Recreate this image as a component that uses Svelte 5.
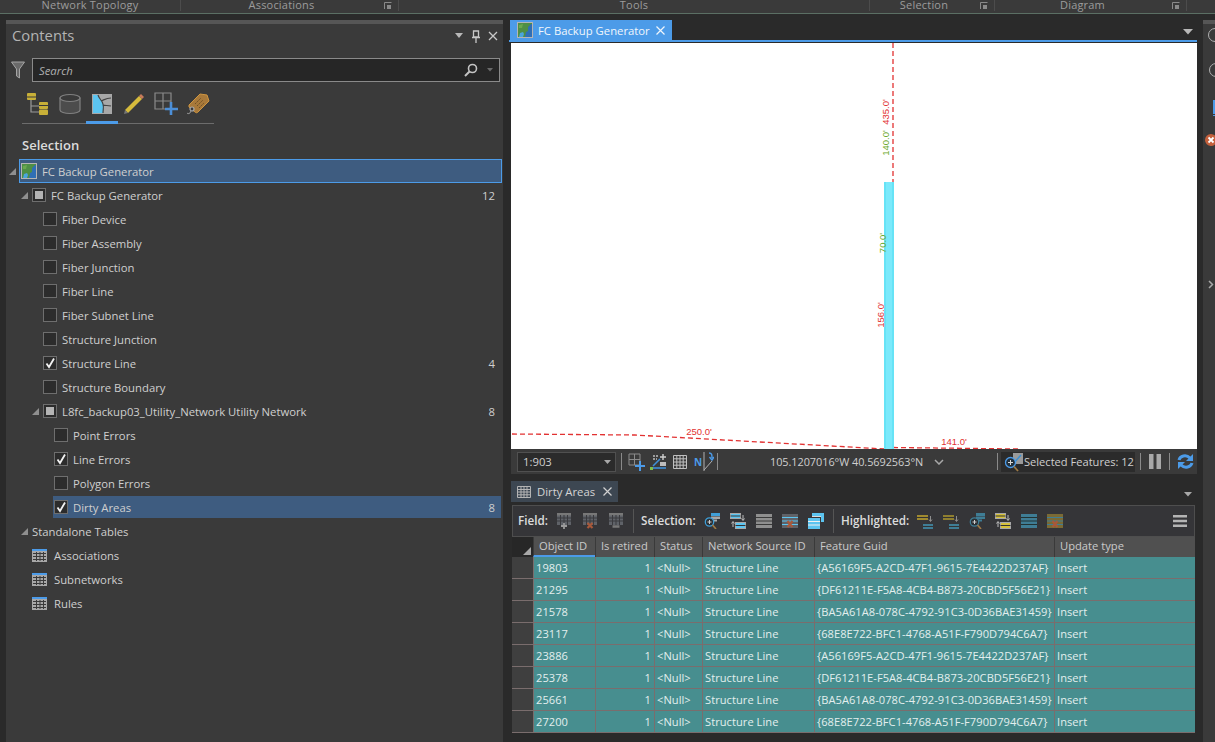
<script>
	const ribbon = [
		{ label: 'Network Topology', width: 181 },
		{ label: 'Associations', width: 218, launcher: true },
		{ label: 'Tools', width: 471 },
		{ label: 'Selection', width: 125, launcher: true },
		{ label: 'Diagram', width: 192, launcher: true }
	];

	const tree = [
		{ kind: 'map', label: 'FC Backup Generator', indent: 3, selected: 'outlined' },
		{ kind: 'partial', label: 'FC Backup Generator', indent: 15, count: 12 },
		{ kind: 'box', label: 'Fiber Device', indent: 37 },
		{ kind: 'box', label: 'Fiber Assembly', indent: 37 },
		{ kind: 'box', label: 'Fiber Junction', indent: 37 },
		{ kind: 'box', label: 'Fiber Line', indent: 37 },
		{ kind: 'box', label: 'Fiber Subnet Line', indent: 37 },
		{ kind: 'box', label: 'Structure Junction', indent: 37 },
		{ kind: 'box', label: 'Structure Line', indent: 37, checked: true, count: 4 },
		{ kind: 'box', label: 'Structure Boundary', indent: 37 },
		{ kind: 'partial', label: 'L8fc_backup03_Utility_Network Utility Network', indent: 26, count: 8 },
		{ kind: 'box', label: 'Point Errors', indent: 48 },
		{ kind: 'box', label: 'Line Errors', indent: 48, checked: true },
		{ kind: 'box', label: 'Polygon Errors', indent: 48 },
		{ kind: 'box', label: 'Dirty Areas', indent: 48, checked: true, count: 8, selected: 'plain' },
		{ kind: 'heading', label: 'Standalone Tables', indent: 15 },
		{ kind: 'table', label: 'Associations', indent: 26 },
		{ kind: 'table', label: 'Subnetworks', indent: 26 },
		{ kind: 'table', label: 'Rules', indent: 26 }
	];

	const guids = [
		'{A56169F5-A2CD-47F1-9615-7E4422D237AF}',
		'{DF61211E-F5A8-4CB4-B873-20CBD5F56E21}',
		'{BA5A61A8-078C-4792-91C3-0D36BAE31459}',
		'{68E8E722-BFC1-4768-A51F-F790D794C6A7}'
	];
	const ids = [19803, 21295, 21578, 23117, 23886, 25378, 25661, 27200];
	const rows = ids.map((id, i) => ({ id, guid: guids[i % 4] }));
	const columns = ['Object ID', 'Is retired', 'Status', 'Network Source ID', 'Feature Guid', 'Update type'];
</script>

{#snippet launcher()}
	<svg class="launcher" width="8" height="8" viewBox="0 0 8 8">
		<path d="M0.5 7V0.5H7.5" fill="none" stroke="#8a8a8a" />
		<path d="M3 3h4v4H3z" fill="#8a8a8a" />
	</svg>
{/snippet}

{#snippet mapIcon(size)}
	<svg width={size} height={size} viewBox="0 0 16 16">
		<rect x="0.5" y="0.5" width="15" height="15" fill="#4f8f45" stroke="#b5b5b5" />
		<path d="M8 15L9 10 11 9 11 5 14 2 15 2V15Z" fill="#2f6fb5" />
		<path d="M2 15L3 11 6 10 7 12 6 15Z" fill="#4aa5dd" />
		<path d="M2 3L6 2 5 6 2 6Z" fill="#6aa84f" />
	</svg>
{/snippet}

{#snippet tableIcon()}
	<svg width="15" height="13" viewBox="0 0 15 13">
		<rect width="15" height="13" fill="#a8a8a8" />
		<rect width="15" height="2" fill="#4c9be8" />
		<path d="M1 4.5h13M1 7.5h13M1 10.5h13M4.5 3v9M8 3v9M11.5 3v9" stroke="#3a3a3a" />
	</svg>
{/snippet}

{#snippet fieldIcon(mark)}
	<svg width="16" height="16" viewBox="0 0 16 16">
		<rect x="1" y="0" width="14" height="12" fill="#5f6268" />
		<rect x="1" y="0" width="14" height="2.500" fill="#787878" />
		<path d="M1 5h14M1 8h14M4.500 2v10M8 2v10M11.500 2v10" stroke="#3a3a3e" />
		{#if mark === 'add'}
			<path d="M8 10v6M5 13h6" stroke="#9a9a9a" stroke-width="1.800" />
		{:else if mark === 'del'}
			<path d="M5.500 10l5 5M10.500 10l-5 5" stroke="#a8583a" stroke-width="2.200" />
		{:else}
			<path d="M4.500 13.500h7" stroke="#787878" stroke-width="2.500" />
		{/if}
	</svg>
{/snippet}

{#snippet zoomRows(a, b)}
	<svg width="16" height="16" viewBox="0 0 16 16">
		<rect x="7" y="0" width="9" height="3" fill={b} />
		<rect x="7" y="3.500" width="9" height="2.500" fill={a} />
		<rect x="7" y="6.500" width="6" height="2" fill={a} />
		<circle cx="5.500" cy="9" r="4.200" fill="#2b2f33" stroke={b} stroke-width="1.300" />
		<path d="M3.500 9h4M5.500 7v4" stroke="#cfcfcf" />
		<path d="M8.500 12l3.500 4" stroke="#a07b45" stroke-width="1.600" />
	</svg>
{/snippet}

{#snippet swapRows(top, bottom)}
	<svg width="16" height="16" viewBox="0 0 16 16">
		<rect x="0.500" y="0.500" width="10" height="5" fill={top} stroke="#a8a8a8" />
		<path d="M0.500 3h10" stroke="#333" />
		<rect x="5.500" y="9.500" width="10" height="6" fill={bottom} stroke="#a8a8a8" />
		<path d="M5.500 12.500h10" stroke="#333" />
		<path d="M13 2v5M11.500 5.500l1.500 2 1.500-2M3 14V9M1.500 10.500l1.500-2 1.500 2" fill="none" stroke="#bdbdbd" />
	</svg>
{/snippet}

{#snippet stripes(fill, line, del)}
	<svg width="16" height="14" viewBox="0 0 16 14">
		<rect width="16" height="14" fill={fill} />
		<path d="M0 3.500h16M0 7h16M0 10.500h16" stroke={line} />
		{#if del}
			<path d="M5.500 7l5 6M10.500 7l-5 6" stroke="#a8583a" stroke-width="2.200" />
		{/if}
	</svg>
{/snippet}

{#snippet moveDown(bar)}
	<svg width="16" height="15" viewBox="0 0 16 15">
		<rect x="0" y="1" width="11" height="5" fill={bar} />
		<path d="M0 3.500h11" stroke="#333" />
		<rect x="6" y="10" width="10" height="5" fill="#3f7d95" />
		<path d="M6 12.500h10" stroke="#333" />
		<path d="M13.500 2v5M12 5.500l1.500 2 1.500-2" fill="none" stroke="#8f8f8f" />
	</svg>
{/snippet}

<div class="app">
	<header class="ribbon">
		{#each ribbon as group}
			<div class="ribbon-group" class:with-launcher={group.launcher} style="width:{group.width}px">
				<span>{group.label}</span>
				{#if group.launcher}{@render launcher()}{/if}
			</div>
		{/each}
	</header>

	<main class="workspace">
		<section class="contents">
			<div class="pane-head">
				<h2>Contents</h2>
				<div class="pane-controls">
					<svg width="10" height="6" viewBox="0 0 10 6"><path d="M1 0h8L5 5z" fill="#b8b8b8" /></svg>
					<svg width="10" height="13" viewBox="0 0 10 13"><path d="M2.500 1h5v6h-5zM1 7.500h8M5 8v5" fill="none" stroke="#c8c8c8" stroke-width="1.300" /></svg>
					<svg width="10" height="10" viewBox="0 0 10 10"><path d="M1 1l8 8M9 1l-8 8" stroke="#c8c8c8" stroke-width="1.300" /></svg>
				</div>
			</div>

			<div class="search-row">
				<svg width="14" height="18" viewBox="0 0 14 18"><path d="M0.500 1h13L8.500 8v9l-3-2V8z" fill="#6a6a6a" stroke="#a5a5a5" /></svg>
				<div class="search">
					<span>Search</span>
					<svg width="14" height="14" viewBox="0 0 14 14"><circle cx="8.500" cy="5.500" r="4" fill="none" stroke="#c4c4c4" stroke-width="1.600" /><path d="M5.500 8.500L1 13" stroke="#c4c4c4" stroke-width="2" /></svg>
					<svg class="search-caret" width="6" height="4" viewBox="0 0 6 4"><path d="M0 0h6L3 3.500z" fill="#6a6a6a" /></svg>
				</div>
			</div>

			<div class="view-tabs">
				<div class="view-tab">
					<svg width="24" height="24" viewBox="0 0 24 24">
						<rect x="1" y="1" width="9" height="7" rx="1" fill="#c8b038" /><rect x="1" y="4.500" width="9" height="1" fill="#3a3a3a" />
						<path d="M5 8v12h8M5 14h8" fill="none" stroke="#9a9a9a" stroke-width="1.200" />
						<rect x="13" y="10" width="9" height="7" rx="1" fill="#c8b038" /><rect x="13" y="13" width="9" height="1" fill="#3a3a3a" />
						<rect x="13" y="17.500" width="9" height="5.500" rx="1" fill="#c8b038" />
					</svg>
				</div>
				<div class="view-tab">
					<svg width="22" height="22" viewBox="0 0 22 22">
						<path d="M1 5v12c0 2 4.500 3.500 10 3.500S21 19 21 17V5z" fill="#4c4c4c" stroke="#808080" stroke-width="1.200" />
						<ellipse cx="11" cy="5" rx="10" ry="3.500" fill="#3a3a3a" stroke="#808080" stroke-width="1.200" />
					</svg>
				</div>
				<div class="view-tab active">
					<svg width="20" height="20" viewBox="0 0 20 20">
						<rect width="20" height="20" fill="#a8a8a8" />
						<path d="M1 1h5c1 4 4 5 5 9 1 3 0 6 0 9H1z" fill="#5cc4f0" />
						<path d="M6 1c1 4 4 5 5 9 1 3 0 6 0 9M9 7c3-1 5-3 10-3M11 11c2 1 5 0 8 1" fill="none" stroke="#444" stroke-width="1.200" />
					</svg>
				</div>
				<div class="view-tab">
					<svg width="22" height="22" viewBox="0 0 22 22">
						<path d="M2 17L16 3l3 3L5 20z" fill="#d6bb3c" />
						<path d="M16 3l2-2 3 3-2 2z" fill="#c77b5a" />
						<path d="M2 17l-1 4 4-1z" fill="#777" />
					</svg>
				</div>
				<div class="view-tab">
					<svg width="24" height="24" viewBox="0 0 24 24">
						<path d="M1 1h16v16H1zM9 1v16M1 9h16" fill="none" stroke="#8a8a8a" stroke-width="1.200" />
						<path d="M17 10v13M11 17h13" stroke="#4c8fd8" stroke-width="2.600" />
					</svg>
				</div>
				<div class="view-tab">
					<svg width="24" height="24" viewBox="0 0 24 24">
						<path d="M3 13L14 2l7 1 2 6-11 11c-1 1-2 1-3 0l-6-5z" fill="#a8793a" stroke="#cf953f" />
						<path d="M9 12l6-6M11 14l6-6M13 16l5-5" stroke="#6f5026" stroke-dasharray="2 1" />
						<circle cx="6" cy="17" r="2" fill="#3a3a3a" stroke="#a8a8a8" stroke-width="1.200" />
						<path d="M5 19c-1 3-3 3-4 2" fill="none" stroke="#a8a8a8" />
					</svg>
				</div>
			</div>

			<h3 class="section-title">Selection</h3>

			<ul class="tree">
				{#each tree as node}
					<li class="node" class:outlined={node.selected === 'outlined'} class:plain={node.selected === 'plain'}>
						<div class="node-inner" style="padding-left:{node.indent}px">
							{#if node.kind !== 'box' && node.kind !== 'table'}
								<svg class="arrow" width="7" height="7" viewBox="0 0 7 7"><path d="M7 0v7H0z" fill="#8f8f8f" /></svg>
							{/if}
							{#if node.kind === 'map'}
								<span class="icon-slot map-slot">{@render mapIcon(16)}</span>
							{:else if node.kind === 'partial'}
								<span class="check"><i></i></span>
							{:else if node.kind === 'box'}
								<span class="check">
									{#if node.checked}
										<svg width="12" height="12" viewBox="0 0 12 12"><path d="M2.500 6.500L5 10 10 1.500" fill="none" stroke="#f2f2f2" stroke-width="1.800" /></svg>
									{/if}
								</span>
							{:else if node.kind === 'table'}
								<span class="icon-slot table-slot">{@render tableIcon()}</span>
							{/if}
							<span class="node-label">{node.label}</span>
							{#if node.count}<span class="count">{node.count}</span>{/if}
						</div>
					</li>
				{/each}
			</ul>
		</section>

		<section class="center">
			<div class="doc-tabs">
				<div class="doc-tab">
					{@render mapIcon(16)}
					<span>FC Backup Generator</span>
					<svg width="9" height="9" viewBox="0 0 9 9"><path d="M0.500 0.500l8 8M8.500 0.500l-8 8" stroke="#eef5fc" stroke-width="1.200" /></svg>
				</div>
				<svg class="strip-caret" width="10" height="6" viewBox="0 0 10 6"><path d="M0 0h10L5 5.500z" fill="#b8b8b8" /></svg>
			</div>

			<div class="map-frame">
				<svg class="map" width="686" height="406" viewBox="511 43 686 406">
					<rect x="511" y="43" width="686" height="406" fill="#fff" />
					<g fill="none" stroke="#e23232" stroke-width="1.300" stroke-dasharray="5 3">
						<path d="M893 43V182" />
						<path d="M512 434L635 435 885 449" />
						<path d="M893 447.500L1020 449" />
					</g>
					<rect x="884" y="182" width="10" height="267" fill="#66e3f6" />
					<rect x="886" y="182" width="6" height="267" fill="#7be9fb" />
					<g class="map-label">
						<text x="699" y="435" fill="#e23232" text-anchor="middle">250.0'</text>
						<text x="954" y="445" fill="#e23232" text-anchor="middle">141.0'</text>
						<text transform="translate(889 112) rotate(-90)" fill="#e23232" text-anchor="middle">435.0'</text>
						<text transform="translate(889 143) rotate(-90)" fill="#6aa82a" text-anchor="middle">140.0'</text>
						<text transform="translate(886 243) rotate(-90)" fill="#6aa82a" text-anchor="middle">70.0'</text>
						<text transform="translate(884 315) rotate(-90)" fill="#e23232" text-anchor="middle">156.0'</text>
					</g>
				</svg>
			</div>

			<div class="statusbar">
				<div class="scale"><span>1:903</span><svg width="7" height="4" viewBox="0 0 7 4"><path d="M0 0h7L3.500 4z" fill="#a8a8a8" /></svg></div>
				<b class="sep first"></b>
				<svg class="st-a" width="18" height="18" viewBox="0 0 18 18">
					<path d="M1 1h11v11H1zM6.500 1v11M1 6.500h11" fill="none" stroke="#8a8a8a" />
					<path d="M12 8v10M7 13h10" stroke="#4c9be8" stroke-width="2" />
				</svg>
				<svg class="st-b" width="18" height="18" viewBox="0 0 18 18">
					<path d="M1 15h15" stroke="#3f8fd8" stroke-width="1.600" /><rect x="0" y="14" width="3" height="3" fill="#7fc04a" />
					<path d="M3 3h5M3 6h4" stroke="#bdbdbd" stroke-width="1.400" stroke-dasharray="2 1" />
					<path d="M13 1v6M10 4h6" stroke="#d0d0d0" stroke-width="1.400" />
					<path d="M3 13l7-7" stroke="#3f8fd8" stroke-width="1.600" /><rect x="10" y="9" width="6" height="4" fill="#bdbdbd" />
				</svg>
				<svg class="st-c" width="14" height="14" viewBox="0 0 14 14"><path d="M0.500 0.500h13v13h-13zM0.500 3.800h13M0.500 7h13M0.500 10.200h13M3.800 0.500v13M7 0.500v13M10.200 0.500v13" fill="none" stroke="#c0c0c0" /></svg>
				<span class="st-d">
					<span class="north">N</span>
					<svg width="11" height="19" viewBox="0 0 11 19">
						<path d="M1 18L9 9M1 0v19" stroke="#b0b0b0" fill="none" />
						<path d="M6 1c3 0 3 2 3 5M6.500 5L9 8l2-3" fill="none" stroke="#4c9be8" stroke-width="1.400" />
					</svg>
				</span>
				<b class="sep"></b>
				<span class="coords">105.1207016°W 40.5692563°N</span>
				<svg class="chevron" width="10" height="6" viewBox="0 0 10 6"><path d="M1 1l4 4 4-4" fill="none" stroke="#a8a8a8" stroke-width="1.500" /></svg>
				<b class="sep"></b>
				<div class="selected-box">
					<svg width="20" height="20" viewBox="0 0 20 20">
						<path d="M9 1h10v11H9z" fill="#9a9a9a" /><path d="M9 12L17 3" stroke="#3c8fd0" stroke-width="1.500" />
						<circle cx="6.500" cy="10.500" r="5" fill="#23303a" stroke="#4c9be8" stroke-width="1.300" />
						<path d="M4 10.500h5M6.500 8v5" stroke="#d8d8d8" />
						<path d="M10 14.500l4 4.500" stroke="#a07b45" stroke-width="1.800" />
					</svg>
					<span>Selected Features: 12</span>
				</div>
				<b class="sep"></b>
				<svg class="pause" width="12" height="15" viewBox="0 0 12 15"><path d="M0 0h4.500v15H0zM7.500 0H12v15H7.500z" fill="#a8a8a8" /></svg>
				<b class="sep"></b>
				<svg class="refresh" width="17" height="17" viewBox="0 0 17 17">
					<path d="M2 7c1-4 7-6 11-2" fill="none" stroke="#4c9be8" stroke-width="3" />
					<path d="M16 1v7H9z" fill="#4c9be8" />
					<path d="M15 10c-1 4-7 6-11 2" fill="none" stroke="#4c9be8" stroke-width="3" />
					<path d="M1 16V9h7z" fill="#4c9be8" />
				</svg>
			</div>

			<div class="table-tabs">
				<div class="table-tab">
					<svg width="14" height="12" viewBox="0 0 14 12"><path d="M0.500 0.500h13v11h-13zM0.500 3.500h13M0.500 6h13M0.500 8.800h13M4 0.500v11M7 0.500v11M10 0.500v11" fill="none" stroke="#b4b4b4" /></svg>
					<span>Dirty Areas</span>
					<svg width="9" height="9" viewBox="0 0 9 9"><path d="M0.500 0.500l8 8M8.500 0.500l-8 8" stroke="#d0d0d0" stroke-width="1.200" /></svg>
				</div>
				<svg class="strip-caret" width="8" height="5" viewBox="0 0 8 5"><path d="M0 0h8L4 4.500z" fill="#a8a8a8" /></svg>
			</div>

			<div class="table-pane">
				<div class="toolbar">
					<strong class="lbl-field">Field:</strong>
					<span class="tools">
						{@render fieldIcon('add')}
						{@render fieldIcon('del')}
						{@render fieldIcon('calc')}
					</span>
					<b class="tool-sep"></b>
					<strong class="lbl-selection">Selection:</strong>
					<span class="tools">
						{@render zoomRows('#a8a8a8', '#3f9fd8')}
						{@render swapRows('#5cc4f0', '#5cc4f0')}
						{@render stripes('#8f8f8f', '#3a3a3a', false)}
						{@render stripes('#5f6268', '#5cc4f0', true)}
						<svg width="16" height="16" viewBox="0 0 16 16">
							<path d="M4 0h12v9h-3V3H4z" fill="#5cc4f0" />
							<path d="M4 3.500h9" stroke="#dcdcdc" />
							<rect x="0" y="5" width="12" height="11" fill="#5cc4f0" />
							<path d="M0 8.500h12M0 12h12" stroke="#f0f0f0" />
						</svg>
					</span>
					<b class="tool-sep"></b>
					<strong class="lbl-highlighted">Highlighted:</strong>
					<span class="tools">
						{@render moveDown('#a08a30')}
						{@render moveDown('#8f7f30')}
						{@render zoomRows('#3f7d95', '#3f7d95')}
						{@render swapRows('#d6c13c', '#d6c13c')}
						{@render stripes('#3f7d95', '#233', false)}
						{@render stripes('#7a6a35', '#3f7d95', true)}
					</span>
					<svg class="menu" width="14" height="12" viewBox="0 0 14 12"><path d="M0 0h14v2.500H0zM0 4.800h14v2.500H0zM0 9.500h14V12H0z" fill="#b4b4b4" /></svg>
				</div>

				<div class="grid-row grid-head">
					<div class="corner"><svg width="8" height="8" viewBox="0 0 8 8"><path d="M8 0v8H0z" fill="#a8a8a8" /></svg></div>
					{#each columns as column, i}
						<div class="th" class:sorted={i === 0}>{column}</div>
					{/each}
				</div>
				{#each rows as row}
					<div class="grid-row grid-body">
						<div class="row-head"></div>
						<div class="td">{row.id}</div>
						<div class="td num">1</div>
						<div class="td">&lt;Null&gt;</div>
						<div class="td">Structure Line</div>
						<div class="td">{row.guid}</div>
						<div class="td">Insert</div>
					</div>
				{/each}
			</div>
		</section>

		<aside class="side-pane">
			<span class="side-title"></span>
			<span class="side-ring"></span>
			<span class="side-tab"></span>
			<svg class="side-error" width="12" height="12" viewBox="0 0 12 12"><circle cx="6" cy="6" r="6" fill="#c4603c" /><path d="M3.500 3.500l5 5M8.500 3.500l-5 5" stroke="#fff" stroke-width="1.800" /></svg>
			<svg class="side-chevron" width="6" height="9" viewBox="0 0 6 9"><path d="M1 1l3.500 3.500L1 8" fill="none" stroke="#a8a8a8" stroke-width="1.500" /></svg>
		</aside>
	</main>
</div>

<style>
	:global(body) {
		margin: 0;
		background: #2a2a2a;
	}

	.app {
		width: 1215px;
		height: 742px;
		overflow: hidden;
		display: flex;
		flex-direction: column;
		background: #2a2a2a;
		color: #d4d4d4;
		font-family: 'Open Sans', 'Liberation Sans', sans-serif;
		font-size: 11.3px;
	}

	/* ribbon leftovers */
	.ribbon {
		height: 14px;
		box-sizing: border-box;
		flex: none;
		display: flex;
		background: #3a3a3a;
		border-bottom: 1px solid #5b6f64;
		overflow: hidden;
	}

	.ribbon-group {
		position: relative;
		box-sizing: border-box;
		height: 11px;
		display: flex;
		justify-content: center;
		border-right: 1px solid #4c4c4c;
		color: #9c9c9c;
		font-size: 11px;
		line-height: 10px;
		letter-spacing: 0.2px;
	}

	.ribbon-group.with-launcher {
		padding-right: 16px;
	}

	.launcher {
		position: absolute;
		right: 6px;
		top: 2px;
	}

	.workspace {
		flex: 1;
		min-height: 0;
		display: grid;
		grid-template-columns: 497px 688px 12px;
		column-gap: 6px;
		padding: 6px 0 0 6px;
	}

	/* contents pane */
	.contents {
		box-sizing: border-box;
		background: #3a3a3a;
		border-top: 4px solid #565656;
		min-width: 0;
	}

	.pane-head {
		height: 22px;
		display: flex;
		align-items: center;
		justify-content: space-between;
		padding: 0 5px 0 6px;
	}

	h2 {
		margin: 0;
		font-size: 14.8px;
		font-weight: 400;
		color: #b4b4b4;
	}

	.pane-controls {
		display: flex;
		align-items: center;
		gap: 7px;
		margin-top: 2px;
	}

	.search-row {
		display: flex;
		align-items: center;
		gap: 7px;
		margin-top: 12px;
		padding: 0 3px 0 5px;
	}

	.search {
		flex: 1;
		height: 24px;
		box-sizing: border-box;
		display: flex;
		align-items: center;
		gap: 9px;
		padding: 0 6px;
		background: #262626;
		border: 1px solid #8a8a8a;
		color: #b0b0b0;
		font-style: italic;
	}

	.search span {
		flex: 1;
	}

	.view-tabs {
		display: flex;
		width: 192px;
		height: 35px;
		margin: 7px 0 0 16px;
		box-sizing: border-box;
		border-bottom: 1px solid #6c6c6c;
	}

	.view-tab {
		position: relative;
		width: 32px;
		height: 30px;
		display: flex;
		align-items: center;
		justify-content: center;
	}

	.view-tab.active::after {
		content: '';
		position: absolute;
		left: 0;
		right: 0;
		top: 32px;
		height: 3px;
		background: #4c9be8;
	}

	.section-title {
		margin: 11px 0 0 16px;
		font-size: 13px;
		font-weight: 600;
		line-height: 20px;
		color: #dcdcdc;
	}

	.tree {
		list-style: none;
		margin: 4px 0 0;
		padding: 0;
	}

	.node {
		height: 24px;
		box-sizing: border-box;
		position: relative;
	}

	.node-inner {
		height: 24px;
		box-sizing: border-box;
		display: flex;
		align-items: center;
		padding-right: 8px;
	}

	.node.outlined .node-inner {
		background: #3e5c80;
		outline: 1px solid #4c9be8;
		outline-offset: -1px;
		margin: 0 1px 0 13px;
		padding-left: 2px !important;
	}

	.node.outlined .arrow {
		position: absolute;
		left: 3px;
	}

	.node.plain::before {
		content: '';
		position: absolute;
		left: 47px;
		right: 2px;
		top: 1px;
		height: 22px;
		background: #3e5c80;
	}

	.node-inner > * {
		position: relative;
	}

	.arrow {
		margin-right: 4px;
		flex: none;
	}

	.icon-slot {
		display: flex;
		flex: none;
	}

	.map-slot {
		margin-right: 5px;
	}

	.table-slot {
		margin-right: 7px;
	}

	.check {
		width: 14px;
		height: 14px;
		box-sizing: border-box;
		flex: none;
		display: flex;
		align-items: center;
		justify-content: center;
		margin-right: 5px;
		background: #2c2c2c;
		border: 1px solid #6e6e6e;
	}

	.check i {
		width: 8px;
		height: 8px;
		background: #b4b4b4;
	}

	.node-label {
		flex: 1;
		white-space: nowrap;
		color: #cfcfcf;
	}

	.count {
		color: #cfcfcf;
	}

	/* map + table column */
	.center {
		min-width: 0;
		display: flex;
		flex-direction: column;
	}

	.doc-tabs,
	.table-tabs {
		display: flex;
		align-items: flex-end;
		justify-content: space-between;
		flex: none;
		padding-right: 4px;
	}

	.doc-tabs {
		height: 20px;
		border-bottom: 2px solid #4c9be8;
	}

	.strip-caret {
		margin-bottom: 5px;
	}

	.doc-tab {
		height: 20px;
		width: 162px;
		margin-left: 1px;
		box-sizing: border-box;
		display: flex;
		align-items: center;
		gap: 5px;
		padding: 0 7px 0 7px;
		background: #4c9be8;
		color: #f0f6fc;
	}

	.doc-tab span {
		flex: 1;
		white-space: nowrap;
	}

	.map-frame {
		flex: none;
		height: 406px;
		padding: 1px 0 0 2px;
	}

	.map {
		display: block;
	}

	.map-label {
		font-family: 'Liberation Sans', sans-serif;
		font-size: 9.5px;
	}

	.statusbar {
		height: 25px;
		flex: none;
		box-sizing: border-box;
		margin-left: 2px;
		display: flex;
		align-items: center;
		background: #3a3a3a;
		color: #cfcfcf;
		padding-left: 6px;
	}

	.statusbar svg {
		flex: none;
	}

	.scale {
		width: 99px;
		height: 20px;
		box-sizing: border-box;
		flex: none;
		display: flex;
		align-items: center;
		justify-content: space-between;
		padding: 0 4px 0 5px;
		background: #2b2b2b;
		border: 1px solid #505050;
	}

	.sep {
		width: 1px;
		height: 17px;
		flex: none;
		background: #8a8a8a;
	}

	.sep.first {
		margin-left: 5px;
	}

	.st-a {
		margin-left: 6px;
	}

	.st-b {
		margin-left: 4px;
	}

	.st-c {
		margin-left: 5px;
	}

	.st-d {
		display: flex;
		align-items: center;
		width: 23px;
		flex: none;
		margin-left: 7px;
	}

	.north {
		color: #4c9be8;
		font-weight: 700;
		font-size: 10px;
		margin-right: 1px;
	}

	.coords {
		width: 153px;
		flex: none;
		margin-left: 52px;
		white-space: nowrap;
		font-size: 10.9px;
		letter-spacing: -0.05px;
	}

	.chevron {
		margin-left: 11px;
		margin-right: 53px;
	}

	.selected-box {
		height: 20px;
		margin: 0 5px 0 3px;
		flex: none;
		width: 134px;
		display: flex;
		align-items: center;
		gap: 0;
		padding-left: 3px;
		box-sizing: border-box;
		background: #2b2b2b;
		white-space: nowrap;
		font-size: 11.1px;
	}

	.pause {
		margin: 0 8px;
	}

	.refresh {
		margin-left: 7px;
	}

	.table-tabs {
		height: 21px;
		margin-top: 7px;
		padding-right: 5px;
	}

	.table-tab {
		width: 107px;
		height: 21px;
		margin-left: 2px;
		box-sizing: border-box;
		display: flex;
		align-items: center;
		gap: 6px;
		padding: 0 6px;
		background: #3d4752;
		color: #d4d4d4;
		white-space: nowrap;
	}

	.table-tab span {
		flex: 1;
	}

	.table-pane {
		flex: 1;
		min-height: 0;
		padding: 3px 2px 0 3px;
		box-sizing: border-box;
	}

	.toolbar {
		height: 32px;
		box-sizing: border-box;
		display: flex;
		align-items: center;
		background: #353538;
		border: 1px solid #4e4e4e;
		padding: 0 7px 0 5px;
		white-space: nowrap;
	}

	.toolbar strong {
		flex: none;
		font-size: 11.7px;
		line-height: 14px;
		margin-bottom: 3px;
		font-weight: 600;
		color: #dcdcdc;
	}

	.lbl-field {
		width: 30px;
	}

	.lbl-selection {
		width: 55px;
	}

	.lbl-highlighted {
		width: 68px;
	}

	.tools {
		display: flex;
		align-items: center;
		gap: 10px;
		margin-left: 8px;
		flex: none;
	}

	.tool-sep {
		width: 1px;
		height: 24px;
		margin: 0 7px 0 9px;
		background: #555;
		flex: none;
	}

	.menu {
		margin-left: auto;
	}

	.grid-row {
		display: grid;
		grid-template-columns: 21px 62px 59px 48px 112px 240px 141px;
	}

	.grid-head {
		height: 20px;
		background: #505050;
		color: #cacaca;
	}

	.corner {
		display: flex;
		align-items: flex-end;
		justify-content: flex-end;
		padding: 0 2px 2px 0;
		box-sizing: border-box;
		background: #272727;
	}

	.th {
		box-sizing: border-box;
		padding-left: 5px;
		line-height: 17px;
		border-left: 1px solid #3a3a3a;
		white-space: nowrap;
		overflow: hidden;
		font-size: 11.2px;
	}

	.th.sorted {
		border-bottom: 2px solid #4c9be8;
	}

	.grid-body {
		height: 22px;
		background: #478e8f;
		color: #e3eeee;
		border-bottom: 1px solid #7a6d6d;
		box-sizing: border-box;
	}

	.row-head {
		background: #3f3f3f;
	}

	.td {
		box-sizing: border-box;
		padding: 0 3px 0 2px;
		line-height: 21px;
		border-left: 1px solid #7a6d6d;
		white-space: nowrap;
		overflow: hidden;
		font-size: 11.1px;
		letter-spacing: 0.05px;
	}

	.td.num {
		text-align: right;
	}

	/* clipped pane on the right edge */
	.side-pane {
		position: relative;
		background: #3a3a3a;
		border-top: 4px solid #565656;
		overflow: hidden;
	}

	.side-title,
	.side-ring {
		position: absolute;
		width: 14px;
		height: 14px;
		box-sizing: border-box;
		border-radius: 50%;
		border: 1px solid #b0b0b0;
	}

	.side-title {
		left: 5px;
		top: 4px;
	}

	.side-ring {
		left: 6px;
		top: 39px;
	}

	.side-tab {
		position: absolute;
		left: 10px;
		top: 76px;
		width: 2px;
		height: 14px;
		background: #4c9be8;
	}

	.side-tab::after {
		content: '';
		position: absolute;
		left: 0;
		top: 15px;
		width: 6px;
		height: 1px;
		background: #4c9be8;
	}

	.side-error {
		position: absolute;
		left: 2px;
		top: 110px;
	}

	.side-chevron {
		position: absolute;
		left: 5px;
		top: 256px;
	}
</style>
